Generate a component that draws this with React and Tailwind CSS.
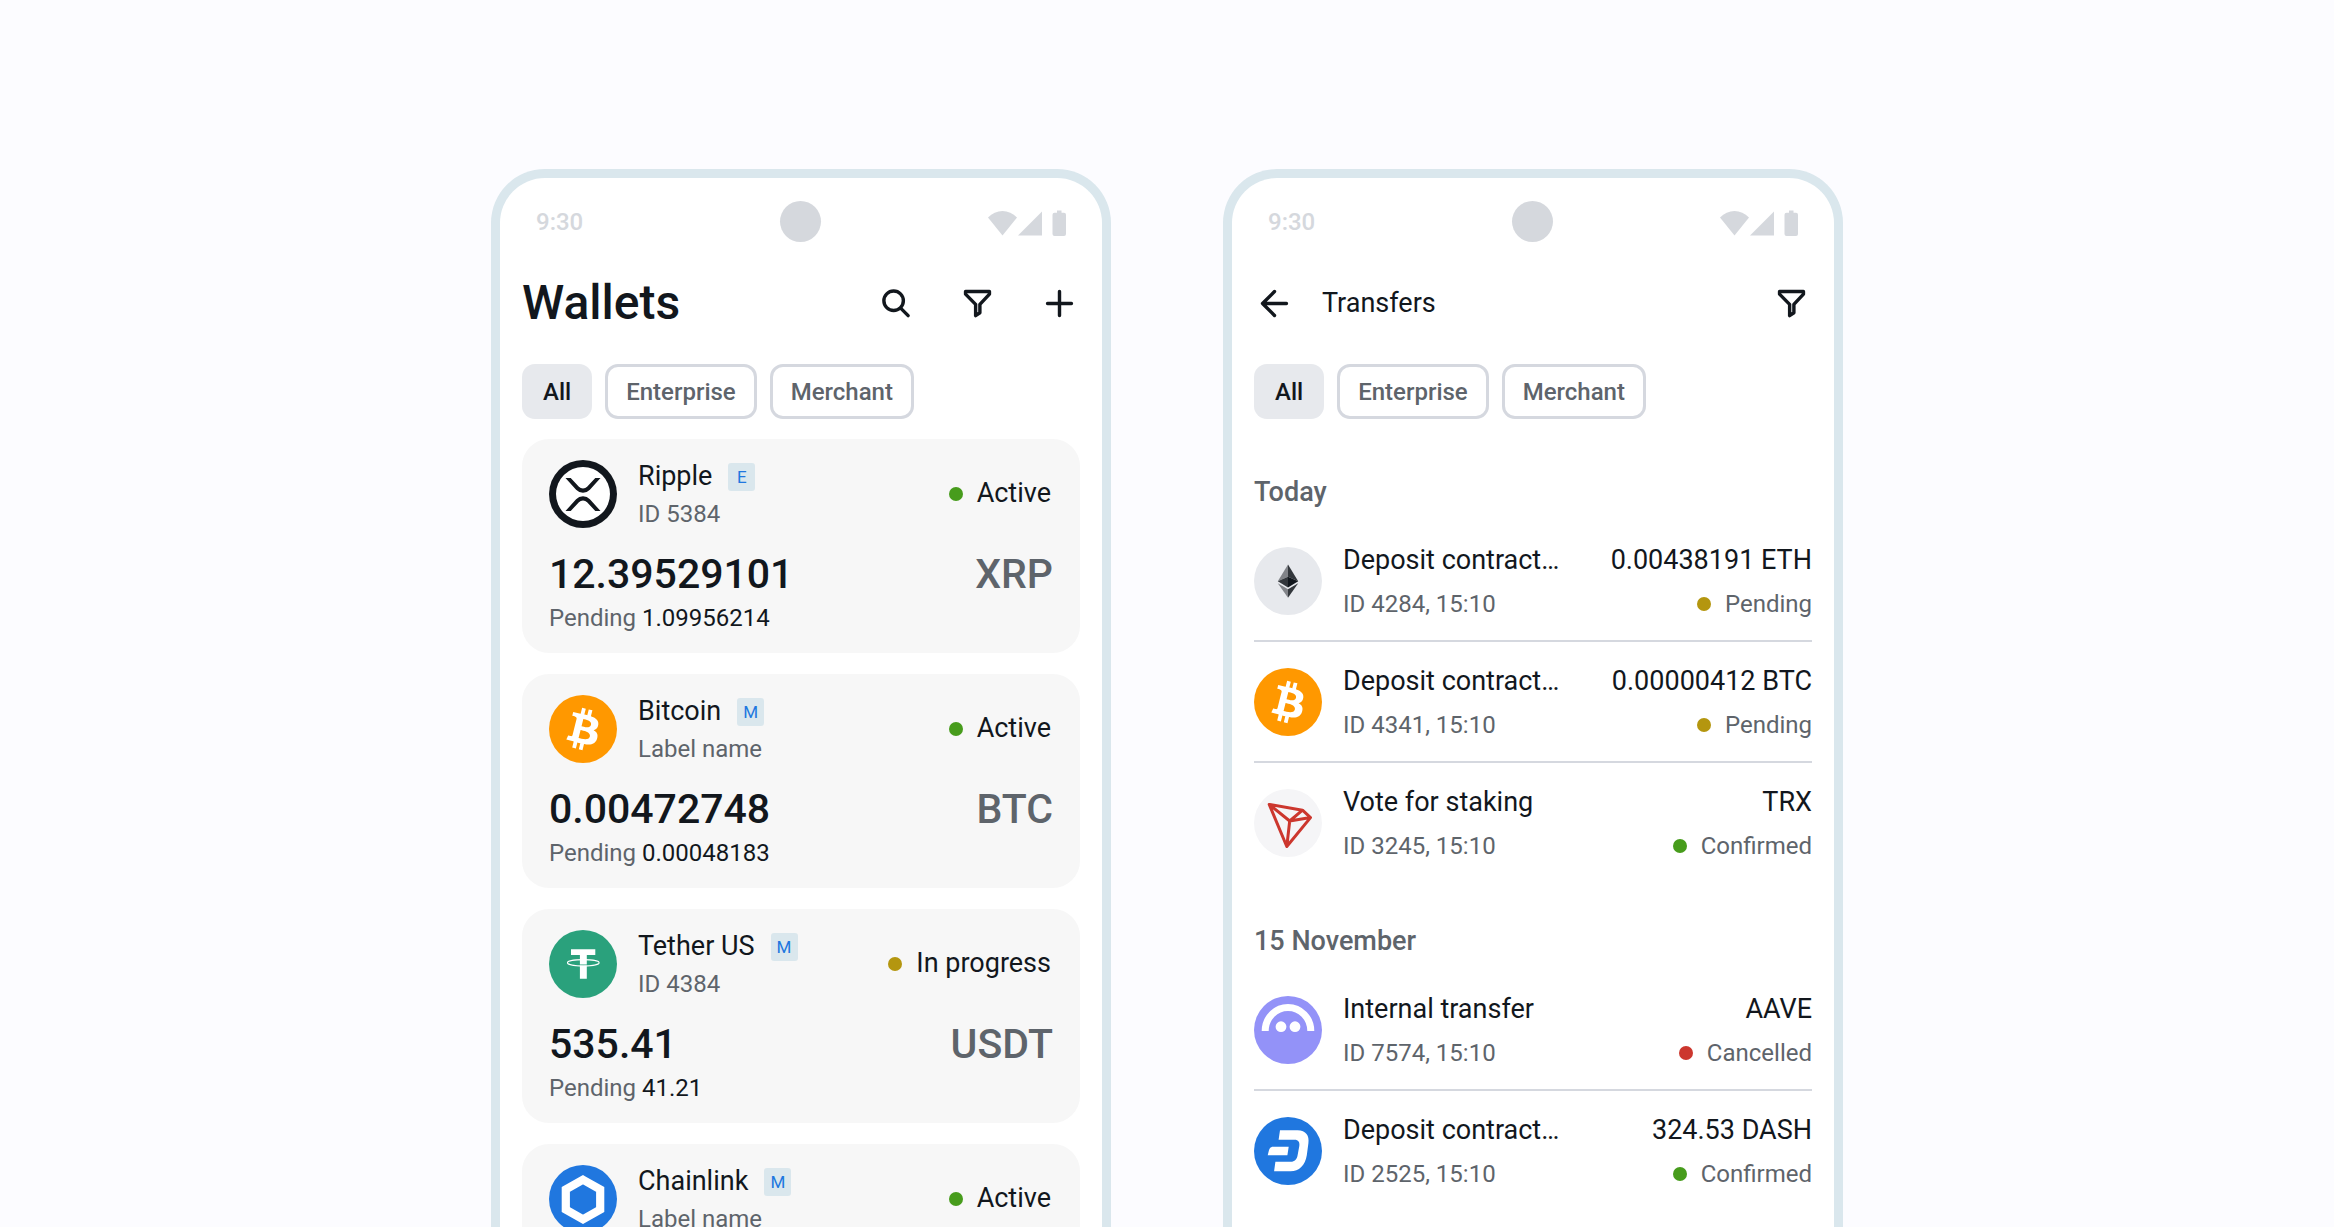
import React from "react";

const svgProps = { xmlns: "http://www.w3.org/2000/svg", "aria-hidden": true };
const lineProps = {
  ...svgProps,
  viewBox: "0 0 24 24",
  className: "size-[41px]",
  fill: "none",
  stroke: "currentColor",
  strokeWidth: 2,
  strokeLinecap: "round",
  strokeLinejoin: "round",
};

function SearchIcon() {
  return (
    <svg {...lineProps}>
      <circle cx="10.9" cy="10.4" r="5.700" />
      <path d="M15 14.700L19.400 19.100" />
    </svg>
  );
}

function FilterIcon() {
  return (
    <svg {...lineProps}>
      <path d="M5 5h14v1.500l-5.600 6v4.900L10.900 19.100v-6.600L5 6.500z" />
    </svg>
  );
}

function PlusIcon() {
  return (
    <svg {...lineProps}>
      <path d="M12 5v14M5 12h14" />
    </svg>
  );
}

function BackIcon() {
  return (
    <svg {...lineProps}>
      <path d="M19 12H5M12 5l-7 7 7 7" />
    </svg>
  );
}

function Xrp() {
  return (
    <svg {...svgProps} viewBox="0 0 68 68" className="size-[68px] shrink-0">
      <circle cx="34" cy="34" r="34" fill="#12171d" />
      <circle cx="34" cy="34" r="27" fill="#fff" />
      <path d="M16.500 18h5.200l8.200 8.800a5.800 5.800 0 0 0 8.200 0l8.200-8.800h5.200L40.900 29.800a9.500 9.500 0 0 1-13.800 0z" fill="#12171d" />
      <path d="M16.500 51h5.200l8.200-8.800a5.800 5.800 0 0 1 8.200 0l8.200 8.800h5.200L40.900 39.200a9.500 9.500 0 0 0-13.800 0z" fill="#12171d" />
    </svg>
  );
}

function Btc() {
  return (
    <svg {...svgProps} viewBox="0 0 32 32" className="size-[68px] shrink-0">
      <circle cx="16" cy="16" r="16" fill="#ff9800" />
      <path
        fill="#fff"
        d="M23.189 14.020c.314-2.096-1.283-3.223-3.465-3.975l.708-2.840-1.728-.430-.690 2.765c-.454-.114-.920-.220-1.385-.326l.695-2.783L15.596 6l-.708 2.839c-.376-.086-.746-.170-1.104-.260l.002-.009-2.384-.595-.460 1.846s1.283.294 1.256.312c.700.175.826.638.805 1.006l-.806 3.235c.048.012.110.030.180.057l-.183-.045-1.130 4.532c-.086.212-.303.531-.793.410.018.025-1.256-.313-1.256-.313l-.858 1.978 2.250.561c.418.105.828.215 1.231.318l-.715 2.872 1.727.430.708-2.840c.472.127.930.245 1.378.357l-.706 2.828 1.728.430.715-2.866c2.948.558 5.164.333 6.097-2.333.752-2.146-.037-3.385-1.588-4.192 1.130-.260 1.980-1.003 2.207-2.538zm-3.950 5.538c-.533 2.147-4.148.986-5.320.695l.950-3.805c1.172.293 4.929.872 4.370 3.110zm.535-5.569c-.487 1.953-3.495.960-4.470.717l.860-3.450c.975.243 4.118.696 3.610 2.733z"
      />
    </svg>
  );
}

function Usdt() {
  return (
    <svg {...svgProps} viewBox="0 0 68 68" className="size-[68px] shrink-0">
      <circle cx="34" cy="34" r="34" fill="#2aa17c" />
      <path d="M22 19.300h24.300v5.800H37.800v23.600h-6.900V25.100H22z" fill="#fff" />
      <path d="M30 35h9" stroke="#2aa17c" strokeWidth="1" />
      <ellipse cx="34.300" cy="32.800" rx="15.800" ry="3.200" fill="none" stroke="#fff" strokeWidth="1.100" />
    </svg>
  );
}

function Link() {
  return (
    <svg {...svgProps} viewBox="0 0 68 68" className="size-[68px] shrink-0">
      <circle cx="34" cy="34" r="34" fill="#2077df" />
      <path d="M34 14.800L51.200 24.500v20L34 54.200 16.800 44.500v-20z" fill="none" stroke="#fff" strokeWidth="8.200" />
    </svg>
  );
}

function Eth() {
  return (
    <svg {...svgProps} viewBox="0 0 68 68" className="size-[68px] shrink-0">
      <circle cx="34" cy="34" r="34" fill="#e7e9ed" />
      <path d="M34 17.500L23.800 34.300 34 29.700z" fill="#828489" />
      <path d="M34 17.500l10.200 16.800L34 29.700z" fill="#33373c" />
      <path d="M34 29.700l-10.200 4.600L34 40.400z" fill="#33373c" />
      <path d="M34 29.700l10.200 4.600L34 40.400z" fill="#12171d" />
      <path d="M23.800 36.300L34 42.300v8.400z" fill="#828489" />
      <path d="M44.200 36.300L34 42.300v8.400z" fill="#33373c" />
    </svg>
  );
}

function Trx() {
  return (
    <svg {...svgProps} viewBox="0 0 68 68" className="size-[68px] shrink-0">
      <circle cx="34" cy="34" r="34" fill="#f5f5f7" />
      <path d="M15.200 15.400L48.500 21.200l8 7.400L32.800 57.500zM15.200 15.400L35.700 32 32.800 57.500M35.700 32l12.800-10.800M35.700 32l20.800-3.400" fill="none" stroke="#cc372e" strokeWidth="3" strokeLinejoin="round" />
    </svg>
  );
}

function Aave() {
  return (
    <svg {...svgProps} viewBox="0 0 68 68" className="size-[68px] shrink-0">
      <circle cx="34" cy="34" r="34" fill="#9392f8" />
      <path d="M11.200 35A22.800 23.600 0 0 1 56.800 35" fill="none" stroke="#fff" strokeWidth="7" />
      <circle cx="27" cy="30.700" r="5.400" fill="#fff" />
      <circle cx="41" cy="30.700" r="5.400" fill="#fff" />
    </svg>
  );
}

function Dash() {
  return (
    <svg {...svgProps} viewBox="0 0 68 68" className="size-[68px] shrink-0">
      <circle cx="34" cy="34" r="34" fill="#2077df" />
      <path d="M26 13.300h17.500c8.500 0 12 5.500 10.900 13l-1.600 12C51.300 48.500 45 54.300 36.500 54.300H20.100l1.300-9.600h15.300c4 0 6.200-2.500 6.900-6.500l1.700-9.200c.6-4-1-6.300-4.700-6.300H24.600z" fill="#fff" />
      <path d="M19 29.700h15.700l-1.300 8.600H13.700l1.200-4.700c.8-2.600 2-3.900 4.100-3.900z" fill="#fff" />
    </svg>
  );
}

function StatusBar() {
  return (
    <div className="grid h-[41px] grid-cols-3 items-center px-[14px] text-[#d5d8dd]">
      <span className="text-[24px] leading-[34px] font-medium">9:30</span>
      <span className="size-[41px] justify-self-center rounded-full bg-current" />
      <svg {...svgProps} viewBox="0 0 78 27" className="mt-1 h-[27px] w-[78px] justify-self-end" fill="currentColor">
        <path d="M0 7.500C8-1.300 21-1.300 29 7.500L14.500 25.500z" />
        <path d="M54 1.500v24H30z" />
        <path d="M69 .5h4.500v2.300H76a2 2 0 0 1 2 2V24a2 2 0 0 1-2 2h-9.500a2 2 0 0 1-2-2V4.800a2 2 0 0 1 2-2H69z" />
      </svg>
    </div>
  );
}

function Chips({ label }) {
  return (
    <nav aria-label={label} className="mt-[33px] flex gap-[13px] text-[24px] leading-[34px] font-medium text-[#5e646b]">
      <button type="button" aria-pressed="true" className="h-[55px] rounded-[13px] bg-[#e7e9ed] px-[21px] text-[#12171d]">All</button>
      <button type="button" aria-pressed="false" className="h-[55px] rounded-[13px] border-3 border-[#d5d8df] px-[18px]">Enterprise</button>
      <button type="button" aria-pressed="false" className="h-[55px] rounded-[13px] border-3 border-[#d5d8df] px-[18px]">Merchant</button>
    </nav>
  );
}

const dots = {
  green: "bg-[#479c1c]",
  gold: "bg-[#b4960f]",
  red: "bg-[#cc372e]",
};

function Status({ color, children }) {
  return (
    <span className="flex items-center justify-end gap-[14px]">
      <span className={`size-[14px] rounded-full ${dots[color]}`} />
      {children}
    </span>
  );
}

function Phone({ label, children }) {
  return (
    <section aria-label={label} className="min-h-full min-w-0 max-w-[620px] flex-1 rounded-t-[54px] border-9 border-b-0 border-[#dae7ed] bg-white px-[22px] pt-[23px]">
      <StatusBar />
      {children}
    </section>
  );
}

const wallets = [
  { Icon: Xrp, name: "Ripple", tag: "E", sub: "ID 5384", status: "Active", color: "green", amount: "12.39529101", unit: "XRP", pending: "1.09956214" },
  { Icon: Btc, name: "Bitcoin", tag: "M", sub: "Label name", status: "Active", color: "green", amount: "0.00472748", unit: "BTC", pending: "0.00048183" },
  { Icon: Usdt, name: "Tether US", tag: "M", sub: "ID 4384", status: "In progress", color: "gold", amount: "535.41", unit: "USDT", pending: "41.21" },
  { Icon: Link, name: "Chainlink", tag: "M", sub: "Label name", status: "Active", color: "green" },
];

function WalletCard({ Icon, name, tag, sub, status, color, amount, unit, pending }) {
  return (
    <li className="min-h-[214px] rounded-[27px] bg-[#f7f7f7] px-[27px] pt-[17px]">
      <div className="flex items-center">
        <Icon />
        <div className="ml-[21px] flex-1">
          <div className="flex items-center gap-[16px] text-[27px] leading-[41px]">
            {name}
            <span className="flex h-[28px] w-[27px] items-center justify-center rounded-[3px] bg-[#dae7ed] text-[17px] leading-[20px] text-[#2077df]">{tag}</span>
          </div>
          <div className="text-[24px] leading-[34px] text-[#5e646b]">{sub}</div>
        </div>
        <div className="pr-0.5 text-[27px] leading-[41px]">
          <Status color={color}>{status}</Status>
        </div>
      </div>
      {amount && (
        <>
          <div className="mt-[16px] flex justify-between text-[41px] leading-[54px] font-medium">
            <span>{amount}</span>
            <span className="text-[#5e646b]">{unit}</span>
          </div>
          <div className="text-[24px] leading-[34px]">
            <span className="text-[#5e646b]">Pending</span> {pending}
          </div>
        </>
      )}
    </li>
  );
}

const groups = [
  {
    title: "Today",
    rows: [
      { Icon: Eth, name: "Deposit contract…", sub: "ID 4284, 15:10", amount: "0.00438191 ETH", status: "Pending", color: "gold" },
      { Icon: Btc, name: "Deposit contract…", sub: "ID 4341, 15:10", amount: "0.00000412 BTC", status: "Pending", color: "gold" },
      { Icon: Trx, name: "Vote for staking", sub: "ID 3245, 15:10", amount: "TRX", status: "Confirmed", color: "green" },
    ],
  },
  {
    title: "15 November",
    rows: [
      { Icon: Aave, name: "Internal transfer", sub: "ID 7574, 15:10", amount: "AAVE", status: "Cancelled", color: "red" },
      { Icon: Dash, name: "Deposit contract…", sub: "ID 2525, 15:10", amount: "324.53 DASH", status: "Confirmed", color: "green" },
    ],
  },
];

function TransferRow({ Icon, name, sub, amount, status, color }) {
  return (
    <li className="flex items-center border-b-2 border-[#d5d8df] pt-[19px] pb-[19px] last:border-transparent">
      <Icon />
      <div className="ml-[21px] grid flex-1 gap-[6px]">
        <div className="flex justify-between text-[27px] leading-[41px]">
          <span>{name}</span>
          <span>{amount}</span>
        </div>
        <div className="flex justify-between text-[24px] leading-[34px] text-[#5e646b]">
          <span>{sub}</span>
          <Status color={color}>{status}</Status>
        </div>
      </div>
    </li>
  );
}

export default function App() {
  return (
    <main className="flex h-screen justify-center gap-[112px] overflow-hidden bg-[#fcfcff] pt-[169px] font-[Roboto,sans-serif] text-[#12171d]">
      <Phone label="Wallets">
        <header className="mt-[33px] flex h-[56px] items-center justify-between">
          <h1 className="text-[48px] leading-[56px] font-medium">Wallets</h1>
          <div className="flex gap-[41px]">
            <button type="button" aria-label="Search"><SearchIcon /></button>
            <button type="button" aria-label="Filter"><FilterIcon /></button>
            <button type="button" aria-label="Add"><PlusIcon /></button>
          </div>
        </header>
        <Chips label="Wallet type" />
        <ul className="mt-[20px] grid gap-[21px]">
          {wallets.map((w) => (
            <WalletCard key={w.name} {...w} />
          ))}
        </ul>
      </Phone>
      <Phone label="Transfers">
        <header className="mt-[33px] flex h-[56px] items-center">
          <button type="button" aria-label="Back"><BackIcon /></button>
          <h1 className="ml-[27px] flex-1 text-[27px] leading-[41px]">Transfers</h1>
          <button type="button" aria-label="Filter"><FilterIcon /></button>
        </header>
        <Chips label="Transfer type" />
        <div className="mt-[53px] grid gap-[37px]">
          {groups.map((g) => (
            <section key={g.title}>
              <h2 className="mb-[8px] text-[27px] leading-[41px] font-medium text-[#5e646b]">{g.title}</h2>
              <ul>
                {g.rows.map((r) => (
                  <TransferRow key={r.sub} {...r} />
                ))}
              </ul>
            </section>
          ))}
        </div>
      </Phone>
    </main>
  );
}
